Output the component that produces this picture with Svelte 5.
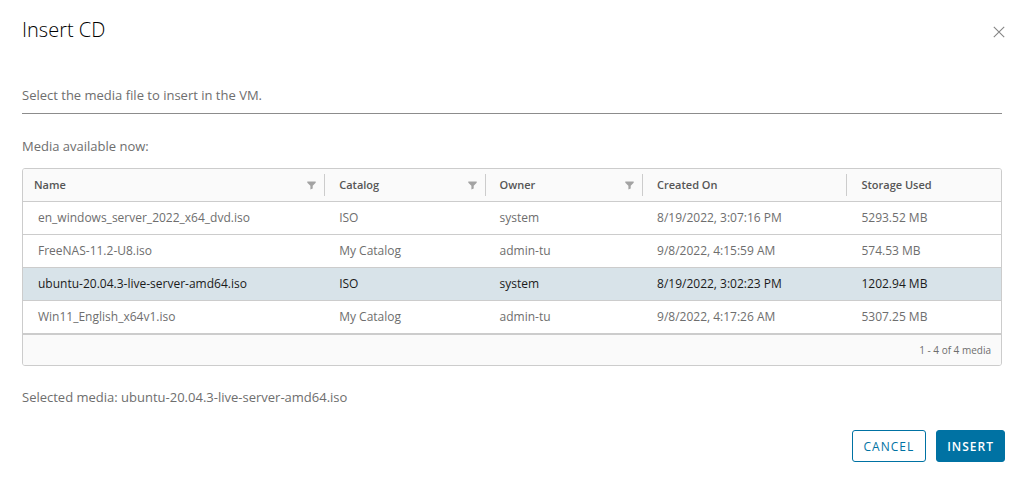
<script>
    let selected = 'ubuntu-20.04.3-live-server-amd64.iso';

    const columns = [
        { key: 'name', label: 'Name', filter: true },
        { key: 'catalog', label: 'Catalog', filter: true },
        { key: 'owner', label: 'Owner', filter: true },
        { key: 'created', label: 'Created On', filter: false },
        { key: 'storage', label: 'Storage Used', filter: false }
    ];

    const media = [
        { name: 'en_windows_server_2022_x64_dvd.iso', catalog: 'ISO', owner: 'system', created: '8/19/2022, 3:07:16 PM', storage: '5293.52 MB' },
        { name: 'FreeNAS-11.2-U8.iso', catalog: 'My Catalog', owner: 'admin-tu', created: '9/8/2022, 4:15:59 AM', storage: '574.53 MB' },
        { name: 'ubuntu-20.04.3-live-server-amd64.iso', catalog: 'ISO', owner: 'system', created: '8/19/2022, 3:02:23 PM', storage: '1202.94 MB' },
        { name: 'Win11_English_x64v1.iso', catalog: 'My Catalog', owner: 'admin-tu', created: '9/8/2022, 4:17:26 AM', storage: '5307.25 MB' }
    ];
</script>

<main class="dialog">
    <header class="dialog-header">
        <h1>Insert CD</h1>
        <button class="close-btn" aria-label="Close">
            <svg width="12" height="12" viewBox="0 0 12 12">
                <path d="M0.8 0.8L11.2 11.2M11.2 0.8L0.8 11.2" fill="none" stroke="#858585" stroke-width="1.1" />
            </svg>
        </button>
    </header>

    <p class="intro">Select the media file to insert in the VM.</p>
    <p class="caption">Media available now:</p>

    <div class="datagrid">
        <table>
            <colgroup>
                <col class="col-name" />
                <col class="col-catalog" />
                <col class="col-owner" />
                <col class="col-created" />
                <col />
            </colgroup>
            <thead>
                <tr>
                    {#each columns as col}
                        <th scope="col">
                            <div class="th-inner">
                                <span>{col.label}</span>
                                {#if col.filter}
                                    <button class="filter-btn" aria-label="Filter {col.label}">
                                        <svg width="9" height="9" viewBox="0 0 9 9">
                                            <path d="M0.3 0.5H8.7V1.8L5.7 4.7V7.6L3.4 8.6V4.7L0.3 1.8Z" fill="#a3a3a3" />
                                        </svg>
                                    </button>
                                {/if}
                            </div>
                        </th>
                    {/each}
                </tr>
            </thead>
            <tbody>
                {#each media as item}
                    <tr class:selected={item.name === selected}>
                        <td><button class="row-btn" on:click={() => (selected = item.name)}>{item.name}</button></td>
                        <td>{item.catalog}</td>
                        <td>{item.owner}</td>
                        <td>{item.created}</td>
                        <td>{item.storage}</td>
                    </tr>
                {/each}
            </tbody>
        </table>
        <div class="datagrid-footer">1 - {media.length} of {media.length} media</div>
    </div>

    <p class="selection">Selected media: {selected}</p>

    <footer class="actions">
        <button class="btn">CANCEL</button>
        <button class="btn primary">INSERT</button>
    </footer>
</main>

<style>
    :global(body) { margin: 0; background: #fff; }

    .dialog { padding: 16px 22px; font-family: Metropolis, "Open Sans", "Noto Sans", sans-serif; font-size: 13px; line-height: 20px; color: #6e6e6e; }
    button { font-family: inherit; cursor: pointer; }
    p { margin: 0; }

    .dialog-header { display: flex; justify-content: space-between; align-items: flex-end; }
    h1 { margin: 0; font-size: 20px; line-height: 28px; font-weight: 300; color: #000; }
    .close-btn { display: flex; padding: 6px; margin-right: -9px; border: none; background: none; }

    .intro { margin-top: 41px; padding-bottom: 8px; border-bottom: 1px solid #8c8c8c; }
    .caption { margin-top: 22px; }

    /* Datagrid */
    .datagrid { margin-top: 12px; border: 1px solid #ccc; border-radius: 3px; overflow: hidden; }
    table { width: 100%; table-layout: fixed; border-collapse: separate; border-spacing: 0; }
    .col-name { width: 30.9%; }
    .col-catalog { width: 16.4%; }
    .col-owner { width: 16.1%; }
    .col-created { width: 20.9%; }

    th { height: 32px; padding: 0; background: #fafafa; border-bottom: 1px solid #ccc; text-align: left; font-size: 11px; font-weight: 600; color: #565656; }
    .th-inner { display: flex; justify-content: space-between; align-items: center; height: 22px; padding: 0 8px 0 14px; border-right: 1px solid #ccc; }
    th:first-child .th-inner { padding-left: 11px; }
    th:last-child .th-inner { border-right: none; }
    .filter-btn { display: flex; padding: 0; border: none; background: none; }

    td { height: 32px; padding: 0 14px; border-bottom: 1px solid #ccc; font-size: 12px; white-space: nowrap; }
    .row-btn { padding: 0; margin-left: 1px; border: none; background: none; font-size: 12px; line-height: 20px; color: inherit; }
    .selected td { background: #d8e3e9; color: #1b1b1b; }

    .datagrid-footer { padding: 5px 10px; border-top: 1px solid #ccc; background: #fafafa; font-size: 10px; text-align: right; }

    .selection { margin-top: 21px; }

    /* Buttons */
    .actions { display: flex; justify-content: flex-end; gap: 10px; margin-top: 23px; margin-right: -3px; }
    .btn { height: 32px; padding: 0 11px; border: 1px solid #0072a3; border-radius: 3px; background: #fff; color: #0072a3; font-size: 12px; letter-spacing: 1px; }
    .btn.primary { padding: 0 10px; background: #0072a3; color: #fff; font-weight: 600; }
</style>
